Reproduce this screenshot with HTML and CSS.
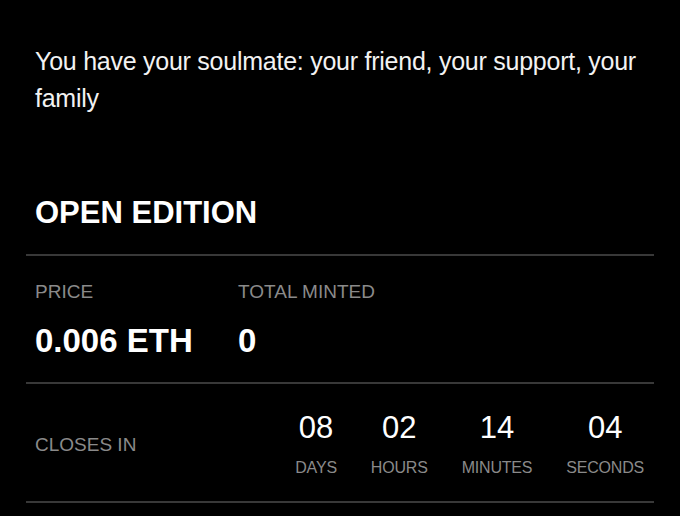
FILE: index.html
```html
<!DOCTYPE html>
<html>
<head>
<meta charset="utf-8">
<link rel="stylesheet" href="styles.css">
</head>
<body>
<div class="page">
  <p class="desc">You have your soulmate: your friend, your support, your family</p>
  <h2 class="title">OPEN EDITION</h2>
  <div class="row stats">
    <div class="stat price">
      <div class="label">PRICE</div>
      <div class="value">0.006 ETH</div>
    </div>
    <div class="stat">
      <div class="label">TOTAL MINTED</div>
      <div class="value">0</div>
    </div>
  </div>
  <div class="row closes">
    <div class="label closes-label">CLOSES IN</div>
    <div class="timer">
      <div class="unit"><div class="num">08</div><div class="ulabel">DAYS</div></div>
      <div class="unit"><div class="num">02</div><div class="ulabel">HOURS</div></div>
      <div class="unit"><div class="num">14</div><div class="ulabel">MINUTES</div></div>
      <div class="unit"><div class="num">04</div><div class="ulabel">SECONDS</div></div>
    </div>
  </div>
</div>
</body>
</html>
```
FILE: styles.css
```css
html, body {
  margin: 0;
  padding: 0;
  background: #000;
}
body {
  font-family: "Liberation Sans", Arial, sans-serif;
  color: #fff;
}
.page {
  padding: 0 26px;
}
.desc {
  margin: 0;
  padding: 43px 9px 0;
  font-size: 25px;
  line-height: 37px;
  letter-spacing: -0.25px;
  color: #f2f2f2;
}
.title {
  margin: 0;
  padding: 78px 9px 23px;
  font-size: 31px;
  line-height: 36px;
  font-weight: bold;
}
.row {
  border-top: 2px solid #383838;
  padding: 0 9px;
}
.stats {
  display: flex;
  padding-top: 24px;
  padding-bottom: 22px;
}
.stat.price {
  width: 203px;
}
.label {
  color: #8a8a8a;
  font-size: 19px;
  line-height: 24px;
}
.value {
  margin-top: 18px;
  font-size: 33px;
  font-weight: bold;
  line-height: 38px;
}
.closes {
  display: flex;
  justify-content: space-between;
  align-items: center;
  padding-top: 26px;
  padding-bottom: 23px;
  border-bottom: 2px solid #383838;
  padding-right: 10px;
}
.closes-label {
  margin-top: 2px;
}
.timer {
  display: flex;
  gap: 34px;
}
.unit {
  display: flex;
  flex-direction: column;
  align-items: center;
}
.num {
  font-size: 31px;
  line-height: 36px;
}
.ulabel {
  margin-top: 12px;
  color: #8a8a8a;
  font-size: 16px;
  line-height: 20px;
  letter-spacing: -0.2px;
}
```
